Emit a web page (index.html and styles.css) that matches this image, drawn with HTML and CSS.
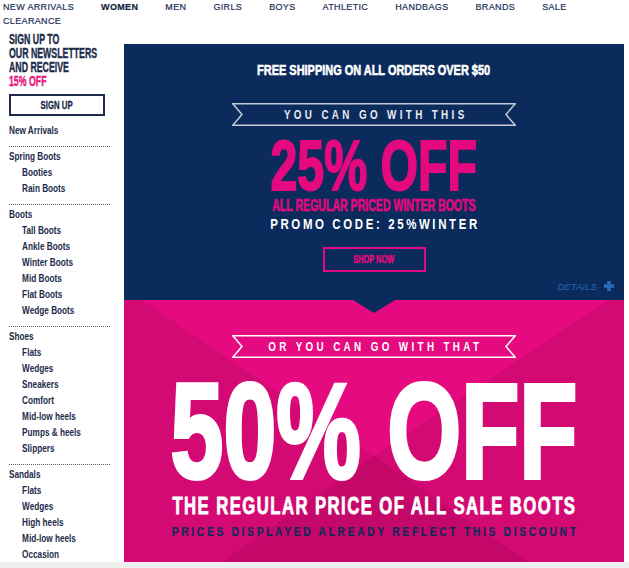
FILE: index.html
```html
<!DOCTYPE html>
<html lang="en">
<head>
<meta charset="utf-8">
<title>Boots Sale</title>
<link rel="stylesheet" href="styles.css">
</head>
<body>
<nav class="topnav">
  <a class="nav-item">NEW ARRIVALS</a>
  <a class="nav-item active">WOMEN</a>
  <a class="nav-item">MEN</a>
  <a class="nav-item">GIRLS</a>
  <a class="nav-item">BOYS</a>
  <a class="nav-item">ATHLETIC</a>
  <a class="nav-item">HANDBAGS</a>
  <a class="nav-item">BRANDS</a>
  <a class="nav-item">SALE</a>
  <a class="nav-item">CLEARANCE</a>
</nav>
<div class="layout">
  <aside class="sidebar">
    <div class="promo">
      <div class="promo-text">SIGN UP TO<br>OUR NEWSLETTERS<br>AND RECEIVE<br><span class="promo-pink">15% OFF</span></div>
    </div>
    <a class="signup"><span class="signup-text">SIGN UP</span></a>
    <ul class="cat-group">
      <li class="cat-head">New Arrivals</li>
    </ul>
    <ul class="cat-group">
      <li class="cat-head">Spring Boots</li>
      <li class="cat-sub">Booties</li>
      <li class="cat-sub">Rain Boots</li>
    </ul>
    <ul class="cat-group">
      <li class="cat-head">Boots</li>
      <li class="cat-sub">Tall Boots</li>
      <li class="cat-sub">Ankle Boots</li>
      <li class="cat-sub">Winter Boots</li>
      <li class="cat-sub">Mid Boots</li>
      <li class="cat-sub">Flat Boots</li>
      <li class="cat-sub">Wedge Boots</li>
    </ul>
    <ul class="cat-group">
      <li class="cat-head">Shoes</li>
      <li class="cat-sub">Flats</li>
      <li class="cat-sub">Wedges</li>
      <li class="cat-sub">Sneakers</li>
      <li class="cat-sub">Comfort</li>
      <li class="cat-sub">Mid-low heels</li>
      <li class="cat-sub">Pumps &amp; heels</li>
      <li class="cat-sub">Slippers</li>
    </ul>
    <ul class="cat-group">
      <li class="cat-head">Sandals</li>
      <li class="cat-sub">Flats</li>
      <li class="cat-sub">Wedges</li>
      <li class="cat-sub">High heels</li>
      <li class="cat-sub">Mid-low heels</li>
      <li class="cat-sub">Occasion</li>
    </ul>
  </aside>
  <main class="banner">
    <section class="navy">
      <div class="ship">FREE SHIPPING ON ALL ORDERS OVER $50</div>
      <div class="ribbon">
        <svg class="ribbon-shape" viewBox="0 0 284 23" width="284" height="23"><polygon points="0.8,0.8 283.2,0.8 274,11.5 283.2,22.2 0.8,22.2 10,11.5" fill="none" stroke="#c3cad6" stroke-width="1.5"/></svg>
        <span class="ribbon-text">YOU CAN GO WITH THIS</span>
      </div>
      <div class="big25">25% OFF</div>
      <div class="allreg">ALL REGULAR PRICED WINTER BOOTS</div>
      <div class="promo-code">PROMO CODE: 25%WINTER</div>
      <a class="shop"><span class="shop-text">SHOP NOW</span></a>
      <div class="details">
        <span class="details-text">DETAILS</span>
        <svg class="plus" viewBox="0 0 10 10" width="10" height="10"><rect x="3.2" y="0" width="3.6" height="10" fill="#2a6bb5"/><rect x="0" y="3.2" width="10" height="3.6" fill="#2a6bb5"/></svg>
      </div>
    </section>
    <section class="pink">
      <svg class="envelope" viewBox="0 0 500 262" width="500" height="262" preserveAspectRatio="none">
        <rect x="0" y="0" width="500" height="262" fill="#d30a73"/>
        <polygon points="18,0 484,0 250,156" fill="#e60a80"/>
        <polygon points="98,262 404,262 250,156" fill="#c4086a"/>
      </svg>
      <div class="ribbon">
        <svg class="ribbon-shape" viewBox="0 0 284 23" width="284" height="23"><polygon points="0.8,0.8 283.2,0.8 274,11.5 283.2,22.2 0.8,22.2 10,11.5" fill="none" stroke="#ffffff" stroke-width="1.5"/></svg>
        <span class="ribbon-text">OR YOU CAN GO WITH THAT</span>
      </div>
      <div class="big50">50% OFF</div>
      <div class="thereg">THE REGULAR PRICE OF ALL SALE BOOTS</div>
      <div class="prices">PRICES DISPLAYED ALREADY REFLECT THIS DISCOUNT</div>
    </section>
  </main>
</div>
<div class="footer"></div>
</body>
</html>
```
FILE: styles.css
```css
* { box-sizing: border-box; margin: 0; padding: 0; }
html, body { background: #ffffff; }
body {
  font-family: "Liberation Sans", Arial, sans-serif;
  color: #1c2b4b;
  width: 629px;
}

/* top navigation */
.topnav {
  display: flex;
  flex-wrap: wrap;
  column-gap: 27px;
  padding-left: 3px;
  height: 28px;
  line-height: 14px;
  font-size: 9px;
  letter-spacing: 0.35px;
  -webkit-text-stroke: 0.2px #22305a;
}
.nav-item { color: #22305a; text-decoration: none; }
.nav-item.active { font-weight: bold; color: #0f1c36; }

/* layout */
.layout { display: flex; height: 534px; }

/* sidebar */
.sidebar { width: 124px; flex: none; padding: 4px 0 0 9px; }
.promo {
  height: 56px;
  font-size: 14px;
  line-height: 14px;
  font-weight: bold;
  color: #1c2b4b;
}
.promo-text {
  display: inline-block;
  white-space: nowrap;
  transform: scaleX(0.626);
  transform-origin: 0 0;
  -webkit-text-stroke: 0.4px currentColor;
}
.promo-pink { color: #e8157f; }
.signup {
  display: flex;
  align-items: center;
  justify-content: center;
  width: 96px;
  height: 22px;
  margin-top: 6px;
  border: 2px solid #1c2b4b;
  font-size: 11px;
  font-weight: bold;
  color: #1c2b4b;
}
.signup-text { display: inline-block; transform: scaleX(0.709); -webkit-text-stroke: 0.3px #1c2b4b; }
.cat-group {
  list-style: none;
  width: 101px;
  border-bottom: 1px dotted #555a66;
  padding-bottom: 7px;
  margin-bottom: 2px;
}
.cat-group:first-of-type { margin-top: 7px; }
.cat-group:last-child { border-bottom: none; }
.cat-group li {
  font-size: 10px;
  font-weight: bold;
  line-height: 16px;
  white-space: nowrap;
  color: #1c2b4b;
  transform: scaleX(0.82);
  transform-origin: 0 0;
}
.cat-group .cat-sub { padding-left: 16px; }

/* banner */
.banner { width: 500px; flex: none; margin-top: 16px; display: flex; flex-direction: column; }
.navy {
  height: 256px;
  background: #0a2b5b;
  display: flex;
  flex-direction: column;
  align-items: center;
  padding-top: 18px;
}
.ship {
  font-size: 15px;
  line-height: 16px;
  font-weight: bold;
  color: #ffffff;
  white-space: nowrap;
  transform: scaleX(0.73);
  -webkit-text-stroke: 0.6px #ffffff;
}
.ribbon {
  position: relative;
  width: 284px;
  height: 23px;
  flex: none;
  display: flex;
  align-items: center;
  justify-content: center;
}
.navy .ribbon { margin-top: 25px; }
.ribbon-shape { position: absolute; left: 0; top: 0; }
.ribbon-text {
  position: relative;
  font-size: 12px;
  line-height: 12px;
  font-weight: bold;
  letter-spacing: 4.1px;
  padding-left: 4.1px;
  white-space: nowrap;
  color: #e9ecf2;
  transform: scaleX(0.82);
}
.big25 {
  margin-top: 14px;
  font-size: 70px;
  line-height: 52px;
  font-weight: bold;
  color: #e5097f;
  white-space: nowrap;
  transform: scaleX(0.69);
  -webkit-text-stroke: 2px #e5097f;
}
.allreg {
  margin-top: 6px;
  font-size: 16.5px;
  line-height: 14px;
  font-weight: bold;
  color: #e5097f;
  white-space: nowrap;
  transform: scaleX(0.64);
  -webkit-text-stroke: 0.6px #e5097f;
}
.promo-code {
  margin-top: 6px;
  font-size: 14px;
  line-height: 12px;
  font-weight: bold;
  letter-spacing: 3.2px;
  padding-left: 3.2px;
  color: #ffffff;
  white-space: nowrap;
  transform: scaleX(0.818);
}
.shop {
  margin-top: 17px;
  width: 103px;
  height: 25px;
  flex: none;
  border: 2px solid #e5097f;
  display: flex;
  align-items: center;
  justify-content: center;
}
.shop-text {
  font-size: 10px;
  font-weight: bold;
  color: #e5097f;
  white-space: nowrap;
  transform: scaleX(0.738);
  -webkit-text-stroke: 0.4px #e5097f;
}
.details {
  align-self: stretch;
  margin-top: 8px;
  height: 12px;
  padding-right: 10px;
  display: flex;
  justify-content: flex-end;
  align-items: center;
  gap: 7px;
}
.details-text {
  font-style: italic;
  font-size: 9.5px;
  letter-spacing: 0.1px;
  color: #2766b0;
}

.pink {
  position: relative;
  height: 262px;
  overflow: hidden;
  background: #d30a73;
  display: flex;
  flex-direction: column;
  align-items: center;
  padding-top: 35px;
}
.pink::before {
  content: "";
  position: absolute;
  top: 0;
  left: 229px;
  width: 0;
  height: 0;
  border-left: 21px solid transparent;
  border-right: 21px solid transparent;
  border-top: 13px solid #0a2b5b;
  z-index: 2;
}
.envelope { position: absolute; left: 0; top: 0; z-index: 0; }
.pink > div { position: relative; z-index: 1; }
.pink .ribbon-text { color: #ffffff; }
.big50 {
  margin-top: 23px;
  font-size: 136px;
  line-height: 100px;
  font-weight: bold;
  color: #ffffff;
  white-space: nowrap;
  transform: scaleX(0.699);
  -webkit-text-stroke: 4px #ffffff;
}
.thereg {
  margin-top: 16px;
  font-size: 23.5px;
  line-height: 18px;
  font-weight: bold;
  letter-spacing: 2px;
  padding-left: 2px;
  color: #ffffff;
  white-space: nowrap;
  transform: scaleX(0.712);
  -webkit-text-stroke: 0.8px #ffffff;
}
.prices {
  margin-top: 12px;
  font-size: 12.5px;
  line-height: 10px;
  font-weight: bold;
  letter-spacing: 3.28px;
  padding-left: 3.28px;
  color: #0d2a5a;
  white-space: nowrap;
  transform: scaleX(0.82);
  -webkit-text-stroke: 0.2px #0d2a5a;
}

.footer { height: 6px; background: #f0f0f0; }
```
